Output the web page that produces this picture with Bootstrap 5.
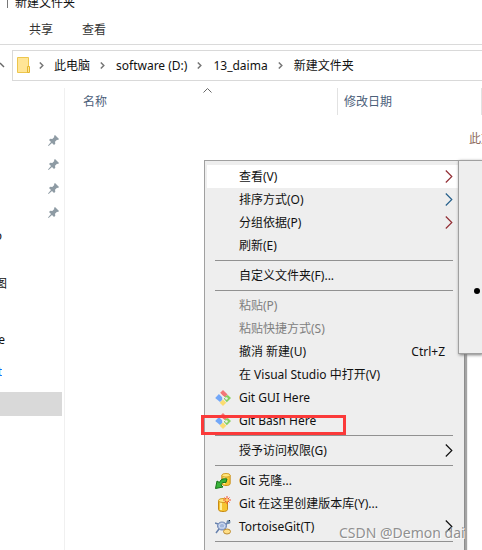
<!DOCTYPE html>
<html lang="zh-CN">
<head>
<meta charset="utf-8">
<meta name="viewport" content="width=device-width, initial-scale=1">
<title>新建文件夹</title>
<link href="https://cdn.jsdelivr.net/npm/bootstrap@5.3.0/dist/css/bootstrap.min.css" rel="stylesheet">
<style>
body { font: 12px/16px "Noto Sans", "Noto Sans CJK SC", sans-serif; color: #111; background: #fff; }
button { font: inherit; color: inherit; background: none; border: 0; padding: 0; text-align: left; }
a { color: inherit; text-decoration: none; }
svg { display: block; flex: none; }
.titlebar { height: 12px; padding-left: 7px; gap: 7px; align-items: flex-end; }
.titlebar i { width: 1px; height: 8px; background: #777; align-self: flex-start; }
.titlebar span { line-height: 16px; margin-bottom: 1px; }
.tabs { height: 33px; padding: 4px 29px 0; gap: 29px; border-bottom: 1px solid #dadada; color: #333; }
.address { margin-top: 5px; height: 31px; }
.up { width: 12px; }
.path { border: 1px solid #d9d9d9; border-right: 0; padding: 0 4px; }
.crumb-sep { margin: 0 11px 0 10px; }
.folder + .crumb-sep { margin: 0 10px 0 9px; }
.files { margin-top: 7px; }
.side { width: 64px; padding-top: 40px; }
.side .item { height: 24px; width: 62px; }
.pinned { padding-right: 3px; }
.clip { width: 7px; height: 16px; }
.clip-2 { width: 2px; }
.clip-5 { width: 5px; }
.gap-8 { margin-top: 8px; }
.gap-24 { margin-top: 24px; }
.gap-32 { margin-top: 32px; }
.selected { background: #d9d9d9; }
.content { border-left: 1px solid #f0f0f0; }
.heads { height: 27px; color: #4c607a; }
.heads > div { border-right: 1px solid #e2e2e2; }
.c-name { width: 273px; padding-left: 18px; }
.c-date { width: 144px; padding-left: 6px; }
.sort { left: 138px; top: 0; }
.blank { padding: 16px 0 0 404px; color: #8d6a5d; }
.ctx { left: 204px; top: 160px; width: 260px; background: #eee; border: 1px solid #a0a0a0; border-right: 0; padding: 4px 5px 0 2px; box-shadow: 1px 4px 0 #8d8d8d, 3px 4px 1px #a4a4a4; }
.ctx button { display: flex; align-items: center; height: 23px; width: 100%; }
.ctx button > span:first-child { width: 32px; padding-left: 8px; flex: none; }
.ctx .first { background: #fff; }
.ctx hr { margin: 3px 6px 3px 8px; border: 0; height: 1px; background: #919191; opacity: 1; }
.ctx .arrow { margin: 0 6px 0 auto; }
.ctx .key { margin: 0 14px 0 auto; }
.ctx :disabled { color: #808080; }
.red-tint { color: #932f35; }
.blue-tint { color: #27618c; }
.sub { left: 458px; top: 160px; right: 0; height: 194px; background: #eee; border: 1px solid #a0a0a0; border-right: 0; padding: 127px 0 0 15px; box-shadow: 1px 1px 3px #777; }
.dot { width: 6px; height: 6px; border-radius: 50%; background: #000; }
.highlight { left: 201px; top: 415px; width: 145px; height: 20px; border: 3px solid #fb3a3a; }
.watermark { left: 339px; top: 523px; font-size: 14px; line-height: 20px; color: #909090; text-shadow: 1px 1px 0 #fff; }
</style>
<script src="https://cdn.jsdelivr.net/npm/bootstrap@5.3.0/dist/js/bootstrap.bundle.min.js"></script>
</head>
<body>
<svg width="0" height="0" class="position-absolute" aria-hidden="true">
  <symbol id="pin" viewBox="0 0 11 11"><path d="M7 0l4 4-1 1-1-.3-2 2 .3 2L6 10 4 8 .6 11 0 10.400 3 7 1 5l1.300-1.300 2 .3 2-2L6 1z" fill="#8e9ba4"/></symbol>
  <symbol id="next" viewBox="0 0 5 7"><path d="M.8.5l3 3-3 3" fill="none" stroke="#777" stroke-width="1.500"/></symbol>
  <symbol id="arrow" viewBox="0 0 8 13"><path d="M.8.5l6 6-6 6" fill="none" stroke="currentColor" stroke-width="1.200"/></symbol>
  <symbol id="git" viewBox="0 0 16 16">
    <path d="M5.200 2.800L8 0l4.600 4.600L10 7.200 8 6z" fill="#f37778"/><path d="M3.900 4.100L7.400 7.600v2.100L5 12 .2 8z" fill="#72a7f8"/>
    <path d="M12.800 4.900L16 8l-4.200 4.200L9 9V7z" fill="#86d05f"/><path d="M8 9.500l3.300 3.300L8 16l-3.300-3.200z" fill="#fbdc70"/>
    <path d="M5 3.500L8 6.500V9.500M8 6.500l3 2" stroke="#eee" stroke-width="1" fill="none"/><circle cx="11.500" cy="8.500" r="1.200" fill="#eee"/>
  </symbol>
  <symbol id="barrel" viewBox="0 0 10 14"><path d="M.5 2.500v9c0 2.700 9 2.700 9 0v-9" fill="#f6c532" stroke="#c78a13"/><path d="M3 4v8" stroke="#fff09a" stroke-width="2"/><ellipse cx="5" cy="2.500" rx="4.500" ry="2" fill="#ffe77d" stroke="#d39b20"/></symbol>
</svg>

<div class="vh-100 overflow-hidden position-relative d-flex flex-column">
  <header class="titlebar d-flex overflow-hidden"><i></i><span>新建文件夹</span></header>
  <nav class="tabs d-flex align-items-center"><button type="button">共享</button><button type="button">查看</button></nav>
  <div class="address d-flex align-items-stretch">
    <button class="up" type="button" aria-label="上移"><svg width="5" height="8"><path d="M0 1l4 4" stroke="#666" stroke-width="1.500"/></svg></button>
    <nav class="path d-flex align-items-center flex-grow-1 text-nowrap" aria-label="路径">
      <svg class="folder" width="13" height="17" viewBox="0 0 13 17"><path d="M.5.500h11v15H.5z" fill="#ffe596" stroke="#edc64d"/><path d="M10.500 9.500h2v6h-2z" fill="#ffe596" stroke="#e4b62f"/></svg>
      <svg class="crumb-sep" width="5" height="7"><use href="#next"/></svg><a href="#">此电脑</a>
      <svg class="crumb-sep" width="5" height="7"><use href="#next"/></svg><a href="#">software (D:)</a>
      <svg class="crumb-sep" width="5" height="7"><use href="#next"/></svg><a href="#">13_daima</a>
      <svg class="crumb-sep" width="5" height="7"><use href="#next"/></svg><a href="#">新建文件夹</a>
    </nav>
  </div>
  <main class="files d-flex flex-grow-1">
    <aside class="side flex-shrink-0">
      <div class="item pinned d-flex align-items-center justify-content-end"><svg width="11" height="11"><use href="#pin"/></svg></div>
      <div class="item pinned d-flex align-items-center justify-content-end"><svg width="11" height="11"><use href="#pin"/></svg></div>
      <div class="item pinned d-flex align-items-center justify-content-end"><svg width="11" height="11"><use href="#pin"/></svg></div>
      <div class="item pinned d-flex align-items-center justify-content-end"><svg width="11" height="11"><use href="#pin"/></svg></div>
      <div class="item d-flex align-items-center"><div class="clip clip-2 d-flex justify-content-end overflow-hidden">o</div></div>
      <div class="item gap-24 d-flex align-items-center"><div class="clip d-flex justify-content-end overflow-hidden"><span>图</span></div></div>
      <div class="item gap-32 d-flex align-items-center"><div class="clip clip-5 d-flex justify-content-end overflow-hidden"><span>e</span></div></div>
      <div class="item gap-8 d-flex align-items-center"><div class="clip clip-2 d-flex justify-content-end overflow-hidden text-primary"><span>t</span></div></div>
      <div class="item gap-8 selected"></div>
    </aside>
    <section class="content flex-grow-1 overflow-hidden">
      <div class="heads d-flex align-items-center position-relative">
        <div class="c-name h-100 d-flex align-items-center flex-shrink-0">名称</div>
        <div class="c-date h-100 d-flex align-items-center flex-shrink-0">修改日期</div>
        <svg class="sort position-absolute" width="9" height="5"><path d="M.5 4.500l4-4 4 4" fill="none" stroke="#666"/></svg>
      </div>
      <div class="blank text-nowrap">此文件夹为空。</div>
    </section>
  </main>

  <div class="ctx position-absolute text-nowrap" role="menu">
    <button class="first" type="button"><span></span>查看(V)<svg class="arrow red-tint" width="8" height="13"><use href="#arrow"/></svg></button>
    <button type="button"><span></span>排序方式(O)<svg class="arrow blue-tint" width="8" height="13"><use href="#arrow"/></svg></button>
    <button type="button"><span></span>分组依据(P)<svg class="arrow red-tint" width="8" height="13"><use href="#arrow"/></svg></button>
    <button type="button"><span></span>刷新(E)</button>
    <hr>
    <button type="button"><span></span>自定义文件夹(F)...</button>
    <hr>
    <button type="button" disabled><span></span>粘贴(P)</button>
    <button type="button" disabled><span></span>粘贴快捷方式(S)</button>
    <button type="button"><span></span>撤消 新建(U)<span class="key">Ctrl+Z</span></button>
    <button type="button"><span></span>在 Visual Studio 中打开(V)</button>
    <button type="button"><span><svg width="16" height="16"><use href="#git"/></svg></span>Git GUI Here</button>
    <button type="button"><span><svg width="16" height="16"><use href="#git"/></svg></span>Git Bash Here</button>
    <hr>
    <button type="button"><span></span>授予访问权限(G)<svg class="arrow" width="8" height="13"><use href="#arrow"/></svg></button>
    <hr>
    <button type="button"><span><svg width="16" height="16"><use href="#barrel" x="6" y="0" width="10" height="13"/><path d="M12 6C8 5 5 7 4.500 9.500L2 8 .5 15.500 8 14l-2-2c.5-2 2-3 5-2.500z" fill="#39b339" stroke="#177318"/></svg></span>Git 克隆...</button>
    <button type="button"><span><svg width="16" height="16"><use href="#barrel" x="3" y="2" width="10" height="14"/><path d="M12 0v8M8 4h8M9.500 1.500l5 5M14.500 1.500l-5 5" stroke="#f4512e"/><circle cx="12" cy="4" r="1.500" fill="#ffd65c"/></svg></span>Git 在这里创建版本库(Y)...</button>
    <button type="button"><span><svg width="16" height="16"><path d="M3 5L0 4M4 10l-3 4M10 10l2 3M10 7l3-4" stroke="#6681ad" stroke-width="1.500"/><ellipse cx="7" cy="7" rx="4.500" ry="4" fill="#a3b7dc" stroke="#7388b5"/><path d="M4 6l3-2 3 2-1 3H5z" fill="none" stroke="#d5e0f2"/><circle cx="13.500" cy="3" r="2" fill="#718daf"/><path d="M14 1l1 1" stroke="#123"/><ellipse cx="12" cy="12.500" rx="3.500" ry="2.500" fill="#ffdf87" stroke="#bb8b33"/></svg></span>TortoiseGit(T)<svg class="arrow" width="8" height="13"><use href="#arrow"/></svg></button>
    <hr>
    <button type="button" aria-label="更多"><span></span><svg class="arrow" width="8" height="13"><use href="#arrow"/></svg></button>
  </div>
  <div class="sub position-absolute"><div class="dot"></div></div>
  <div class="highlight position-absolute"></div>
  <div class="watermark position-absolute text-nowrap">CSDN @Demon dai</div>
</div>
</body>
</html>
